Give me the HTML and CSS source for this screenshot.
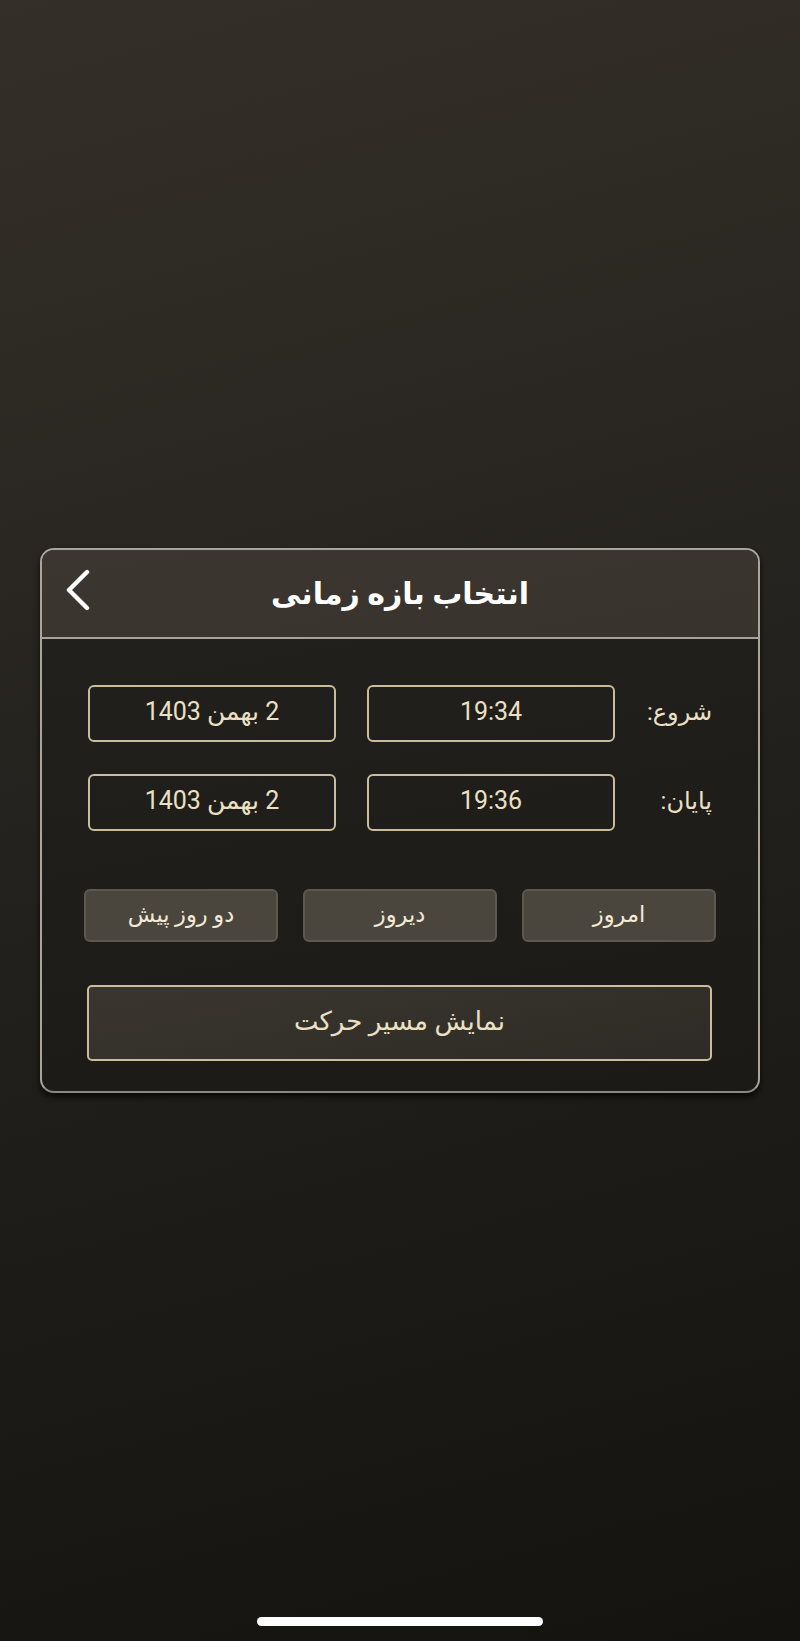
FILE: index.html
```html
<!DOCTYPE html>
<html lang="fa">
<head>
<meta charset="utf-8">
<title>انتخاب بازه زمانی</title>
<link rel="stylesheet" href="styles.css">
</head>
<body>
<main class="screen">
  <section class="card" dir="rtl">
    <header class="card-head">
      <h1 class="title">انتخاب بازه زمانی</h1>
      <button class="back" aria-label="بازگشت">
        <svg width="30" height="42" viewBox="0 0 30 42"><polyline points="24,3 6,21 24,39" fill="none" stroke="#ffffff" stroke-width="4.4" stroke-linecap="round" stroke-linejoin="round"/></svg>
      </button>
    </header>
    <div class="card-body">
      <div class="range-row">
        <span class="range-label">شروع:</span>
        <div class="field">19:34</div>
        <div class="field">2 بهمن 1403</div>
      </div>
      <div class="range-row">
        <span class="range-label">پایان:</span>
        <div class="field">19:36</div>
        <div class="field">2 بهمن 1403</div>
      </div>
      <div class="quick">
        <button class="chip">امروز</button>
        <button class="chip">دیروز</button>
        <button class="chip">دو روز پیش</button>
      </div>
      <button class="primary">نمایش مسیر حرکت</button>
    </div>
  </section>
  <div class="home-bar"></div>
</main>
</body>
</html>
```
FILE: styles.css
```css
* { box-sizing: border-box; }
html, body { margin: 0; padding: 0; }
body {
  font-family: Roboto, "DejaVu Sans", sans-serif;
  background: linear-gradient(165deg, #342f28 0%, #2a2722 30%, #1f1e1a 60%, #141310 100%);
  min-height: 1641px;
}
.screen {
  position: relative;
  min-height: 1641px;
  display: flex;
  align-items: center;
  justify-content: center;
}
.card {
  width: 720px;
  border: 2px solid #aaa49a;
  border-bottom-color: #8c8780;
  border-radius: 14px;
  overflow: hidden;
  background: linear-gradient(170deg, #23211d 0%, #1b1a16 100%);
  box-shadow: 0 4px 6px rgba(0,0,0,0.7);
}
.card-head {
  position: relative;
  height: 89px;
  display: flex;
  align-items: center;
  justify-content: center;
  background: linear-gradient(170deg, #3b3730 0%, #38342d 100%);
  border-bottom: 2px solid #a7a197;
}
.title {
  margin: 0;
  color: #ffffff;
  font-size: 30px;
  font-weight: bold;
  line-height: 1;
  letter-spacing: 0.3px;
}
.back {
  position: absolute;
  left: 21px;
  top: 19px;
  padding: 0;
  border: 0;
  background: none;
  display: flex;
}
.card-body {
  padding: 46px 46px 30px 45px;
  display: flex;
  flex-direction: column;
}
.range-row {
  display: flex;
  align-items: center;
  gap: 31px;
  margin-bottom: 32px;
}
.range-row + .range-row { margin-bottom: 58px; }
.range-label {
  width: 97px;
  margin-left: -31px;
  color: #ece0c4;
  font-size: 24px;
  text-align: right;
  padding-bottom: 4px;
}
.field {
  width: 248px;
  height: 57px;
  border: 2px solid #c9bd9e;
  border-radius: 6px;
  display: flex;
  align-items: center;
  justify-content: center;
  color: #ece0c4;
  font-size: 25px;
  padding-bottom: 4px;
}
.quick {
  display: flex;
  gap: 25px;
  margin: 0 -4px 43px -3px;
}
.chip {
  width: 194px;
  height: 53px;
  background: #4a463d;
  border: 2px solid #5c584d;
  border-radius: 6px;
  color: #f3ead6;
  font-family: inherit;
  font-size: 22.5px;
  padding: 0 0 3px;
}
.primary {
  height: 76px;
  border: 2px solid #c9bd9b;
  border-radius: 5px;
  background: linear-gradient(170deg, #3a362f 0%, #2e2b26 100%);
  color: #ece0c4;
  font-family: inherit;
  font-size: 26px;
  padding: 0 0 4px;
}
.home-bar {
  position: absolute;
  left: 257px;
  bottom: 15px;
  width: 286px;
  height: 9px;
  border-radius: 5px;
  background: #ffffff;
}
```
